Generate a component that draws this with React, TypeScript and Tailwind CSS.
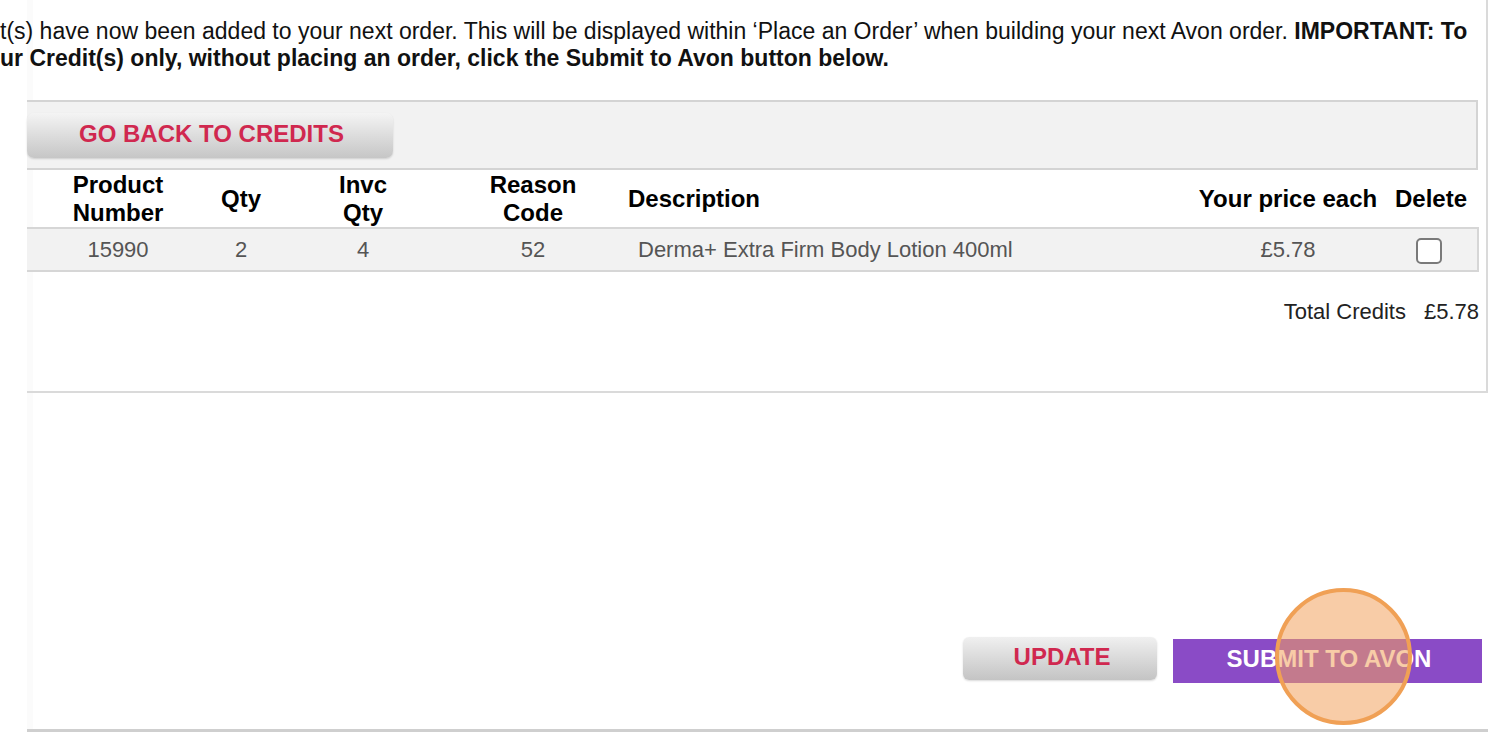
import React from 'react';

const font = { fontFamily: '"Liberation Sans", Arial, sans-serif' };

const App: React.FC = () => {
  return (
    <div className="relative w-[1512px] h-[732px] overflow-hidden bg-white text-black" style={font}>
      <div className="ml-[27px] w-[1461px] border-l-[6px] border-[#fbfbfb]">
        {/* Main credits box */}
        <div className="h-[393px] border-r-2 border-b-2 border-[#dadada] -ml-[6px]">
          <p className="-ml-[27px] pt-[18px] text-[23px] leading-[27px] whitespace-nowrap text-[#111]">
            <span className="block">
              t(s) have now been added to your next order. This will be displayed within ‘Place an Order’ when building your next Avon order.{' '}
              <b>IMPORTANT: To</b>
            </span>
            <b className="block">ur Credit(s) only, without placing an order, click the Submit to Avon button below.</b>
          </p>

          <div className="w-[1451px] mt-[28px]">
            {/* Toolbar */}
            <div className="h-[70px] bg-[#f2f2f2] border-t-2 border-r-2 border-b-2 border-[#d4d4d4] flex items-center">
              <button className="w-[366px] h-[45px] rounded-[7px] bg-gradient-to-b from-[#f4f4f4] to-[#c6c6c6] text-[#d0284f] font-bold text-[24px] leading-[26px] pb-[3px] text-left pl-[52px] shadow-[0_1px_2px_rgba(0,0,0,0.15)]">
                GO BACK TO CREDITS
              </button>
            </div>

            {/* Table */}
            <table className="w-[1451px] table-fixed border-collapse">
              <colgroup>
                <col className="w-[182px]" />
                <col className="w-[64px]" />
                <col className="w-[180px]" />
                <col className="w-[160px]" />
                <col className="w-[583px]" />
                <col className="w-[184px]" />
                <col className="w-[98px]" />
              </colgroup>
              <thead>
                <tr className="h-[58px] text-[24px] leading-[28px] font-bold">
                  <th className="text-center">Product<br />Number</th>
                  <th className="text-center">Qty</th>
                  <th className="text-center">Invc<br />Qty</th>
                  <th className="text-center">Reason<br />Code</th>
                  <th className="text-left pl-[15px]">Description</th>
                  <th className="text-center whitespace-nowrap">Your price each</th>
                  <th className="text-center pl-[4px]">Delete</th>
                </tr>
              </thead>
              <tbody>
                <tr className="h-[43px] bg-[#f2f2f2] border-t-2 border-b-2 border-[#d6d6d6] text-[22px] text-[#555]">
                  <td className="text-center">15990</td>
                  <td className="text-center">2</td>
                  <td className="text-center">4</td>
                  <td className="text-center">52</td>
                  <td className="text-left pl-[25px] whitespace-nowrap">Derma+ Extra Firm Body Lotion 400ml</td>
                  <td className="text-center">£5.78</td>
                  <td className="text-center border-r-2 border-[#d6d6d6]">
                    <span className="inline-block align-middle w-[26px] h-[26px] rounded-[5px] border-2 border-[#7a7a7a] bg-white" />
                  </td>
                </tr>
              </tbody>
            </table>
          </div>

          <div className="flex justify-end gap-[18px] pr-[7px] mt-[23px] text-[22px] text-[#222]">
            <span>Total Credits</span>
            <span>£5.78</span>
          </div>
        </div>

        {/* Action buttons */}
        <div className="flex justify-end items-start gap-[16px] pr-[6px] mt-[244px] -ml-[6px]">
          <button className="w-[194px] h-[43px] rounded-[6px] bg-gradient-to-b from-[#f0f0f0] to-[#c4c4c4] text-[#d0284f] font-bold text-[24px] leading-[26px] pb-[4px] pl-[4px] shadow-[0_1px_2px_rgba(0,0,0,0.15)]">
            UPDATE
          </button>
          <button className="w-[309px] h-[44px] mt-[2px] bg-[#8a4bc6] text-white font-bold text-[24px] leading-[26px] pb-[4px] pl-[3px]">
            SUBMIT TO AVON
          </button>
        </div>

        <div className="mt-[46px] -ml-[6px] h-[3px] bg-[#cfcfcf]" />
      </div>

      {/* Click highlight */}
      <div className="absolute left-[1275px] top-[588px] w-[137px] h-[137px] rounded-full border-[4px] border-[#f0a055] bg-[#f3a35f]/55" />
    </div>
  );
};

export default App;
